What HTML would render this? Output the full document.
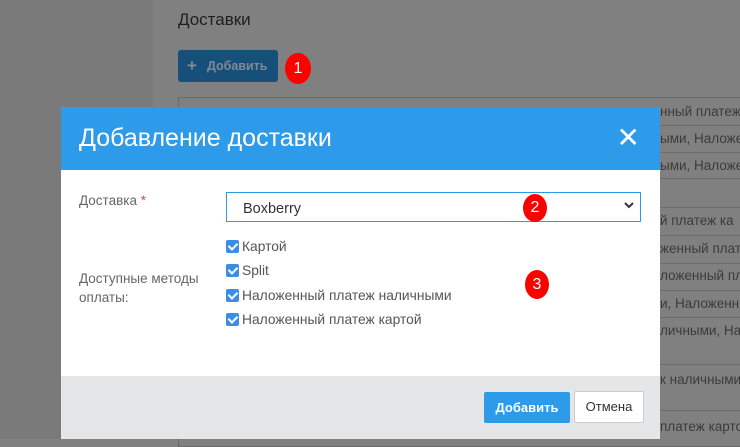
<!DOCTYPE html>
<html><head><meta charset="utf-8"><style>
*{box-sizing:border-box;margin:0;padding:0}
body{width:740px;height:439px;overflow:hidden;position:relative;background:#808080;font-family:"Liberation Sans","DejaVu Sans",sans-serif}
.side{position:absolute;left:0;top:0;width:153px;height:439px;background:#7a7a7a}
.h{position:absolute;left:178px;top:10px;font-size:17px;color:#1f1f1f}
.addb{position:absolute;left:178px;top:50px;width:100px;height:32px;background:#174f7b;border-radius:3px;color:#7d8a96;font-size:12.5px;font-weight:bold;line-height:32px;padding-left:9px}
.addb b{font-size:17px;margin-right:10px;vertical-align:-1px}
.num{position:absolute;width:26px;height:31px;border-radius:50%;background:#f00;color:#fff;font-size:16px;text-align:center;line-height:31px}
.tbl{position:absolute;left:178px;top:97px;width:600px;height:350px;border:1px solid #6a6a6a}
.row{position:absolute;left:660px;font-size:13.5px;color:#3b3b3b;white-space:nowrap}
.ln{position:absolute;left:660px;width:80px;height:1px;background:#6c6c6c}
.modal{position:absolute;left:61px;top:107px;width:599px;height:332px;background:#fff;border-radius:3px 3px 0 0;overflow:hidden}
.mh{height:63px;background:#2d9be9;color:#fff;font-size:25px;padding:17px 0 0 18px}
.x{position:absolute;right:20px;top:14px;font-size:28px;font-weight:bold;color:#fff}
.lbl{position:absolute;font-size:13.5px;color:#666}
.sel{position:absolute;left:165px;top:85px;width:415px;height:30px;border:1px solid #2d9be9;font-size:14.5px;color:#333;padding:8px 0 0 16px}
.chev{position:absolute;right:5px;top:6px}
.cb{position:absolute;left:165px;font-size:13.8px;color:#555}
.cb i{display:inline-block;width:13px;height:13px;background:#3a8ee6;border-radius:2px;vertical-align:-2px;margin-right:3px;position:relative}
.cb i:after{content:"";position:absolute;left:4px;top:1px;width:4px;height:7px;border:solid #fff;border-width:0 2px 2px 0;transform:rotate(45deg)}
.foot{position:absolute;left:0;top:269px;width:599px;height:63px;background:#e5e6e8}
.b1{position:absolute;left:423px;top:16px;width:86px;height:31px;background:#2d9be9;border-radius:2px;color:#fff;font-weight:bold;font-size:13px;text-align:center;line-height:31px}
.b2{position:absolute;left:513px;top:15px;width:70px;height:32px;background:#fff;border:1px solid #ccc;border-radius:2px;color:#333;font-size:13px;text-align:center;line-height:30px}
</style></head><body>
<div class="side"></div>
<div class="h">Доставки</div>
<div class="addb"><b>+</b>Добавить</div>
<div class="num" style="left:285px;top:53px">1</div>
<div class="tbl"></div>
<div class="row" style="top:104px">нный платеж</div>
<div class="ln" style="top:125px"></div>
<div class="row" style="top:131px">ыми, Наложе</div>
<div class="ln" style="top:152px"></div>
<div class="row" style="top:158px">ыми, Наложе</div>
<div class="ln" style="top:178px"></div>
<div class="ln" style="top:207px"></div>
<div class="row" style="top:213px">й платеж ка</div>
<div class="ln" style="top:235px"></div>
<div class="row" style="top:241px">женный плат</div>
<div class="ln" style="top:263px"></div>
<div class="row" style="top:268px">ложенный пл</div>
<div class="ln" style="top:290px"></div>
<div class="row" style="top:296px">и, Наложенн</div>
<div class="ln" style="top:317px"></div>
<div class="row" style="top:323px">личными, На</div>
<div class="ln" style="top:364px"></div>
<div class="row" style="top:372px">к наличными</div>
<div class="ln" style="top:410px"></div>
<div class="row" style="top:419px">платеж карто</div>
<div class="modal">
<div class="mh">Добавление доставки</div>
<div class="x">✕</div>
<div class="lbl" style="left:18px;top:86px">Доставка <span style="color:#e74c3c">*</span></div>
<div class="sel">Boxberry
<svg class="chev" width="12" height="12" viewBox="0 0 12 12"><path d="M2 4l4 4 4-4" stroke="#333" stroke-width="2" fill="none"/></svg></div>
<div class="num" style="left:462px;top:87px;width:24px;height:28px;line-height:28px">2</div>
<div class="lbl" style="left:18px;top:162px;line-height:19px">Доступные методы<br>оплаты:</div>
<div class="cb" style="top:132px"><i></i>Картой</div>
<div class="cb" style="top:156px"><i></i>Split</div>
<div class="cb" style="top:181px"><i></i>Наложенный платеж наличными</div>
<div class="cb" style="top:205px"><i></i>Наложенный платеж картой</div>
<div class="num" style="left:464px;top:163px;width:24px;height:29px;line-height:29px">3</div>
<div class="foot"><div class="b1">Добавить</div><div class="b2">Отмена</div></div>
</div>
</body></html>
